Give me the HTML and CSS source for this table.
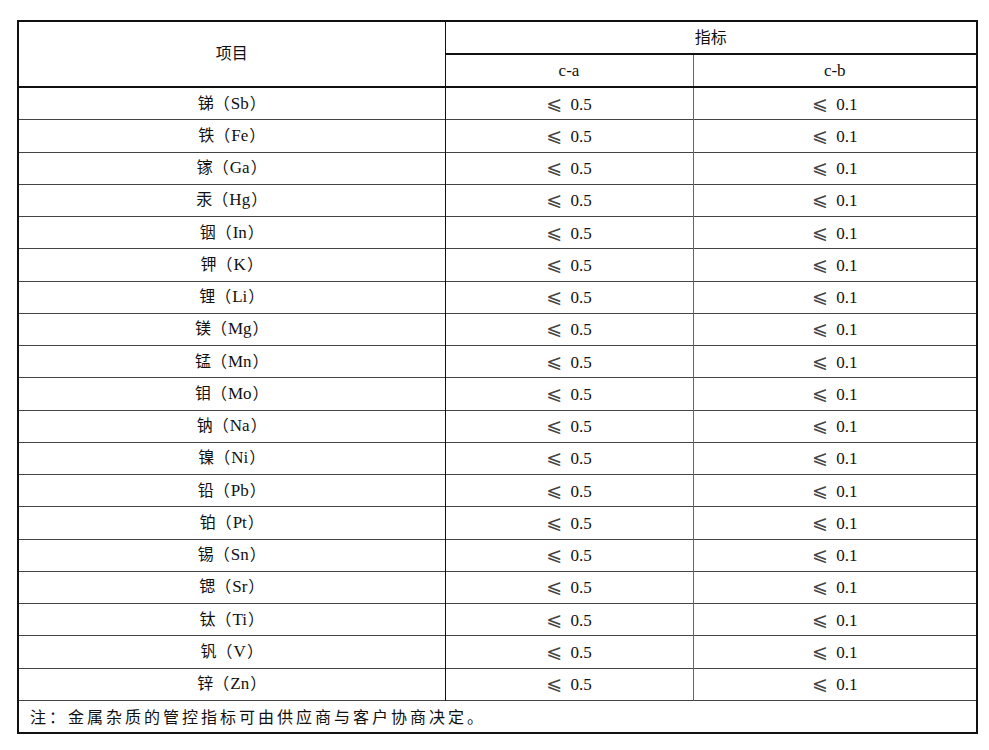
FILE: index.html
```html
<!DOCTYPE html>
<html lang="zh-CN">
<head>
<meta charset="utf-8">
<title>金属杂质指标</title>
<link rel="stylesheet" href="styles.css">
</head>
<body>
<div class="page">
<table class="spec">
  <colgroup>
    <col class="c1"><col class="c2"><col class="c3">
  </colgroup>
  <thead>
    <tr class="h1">
      <th rowspan="2" class="item">项目</th>
      <th colspan="2" class="group">指标</th>
    </tr>
    <tr class="h2">
      <th class="sub">c-a</th>
      <th class="sub">c-b</th>
    </tr>
  </thead>
  <tbody>
    <tr><td>锑（<span class="sym">Sb</span>）</td><td class="val"><span class="le">⩽</span> 0.5</td><td class="val"><span class="le">⩽</span> 0.1</td></tr>
    <tr><td>铁（<span class="sym">Fe</span>）</td><td class="val"><span class="le">⩽</span> 0.5</td><td class="val"><span class="le">⩽</span> 0.1</td></tr>
    <tr><td>镓（<span class="sym">Ga</span>）</td><td class="val"><span class="le">⩽</span> 0.5</td><td class="val"><span class="le">⩽</span> 0.1</td></tr>
    <tr><td>汞（<span class="sym">Hg</span>）</td><td class="val"><span class="le">⩽</span> 0.5</td><td class="val"><span class="le">⩽</span> 0.1</td></tr>
    <tr><td>铟（<span class="sym">In</span>）</td><td class="val"><span class="le">⩽</span> 0.5</td><td class="val"><span class="le">⩽</span> 0.1</td></tr>
    <tr><td>钾（<span class="sym">K</span>）</td><td class="val"><span class="le">⩽</span> 0.5</td><td class="val"><span class="le">⩽</span> 0.1</td></tr>
    <tr><td>锂（<span class="sym">Li</span>）</td><td class="val"><span class="le">⩽</span> 0.5</td><td class="val"><span class="le">⩽</span> 0.1</td></tr>
    <tr><td>镁（<span class="sym">Mg</span>）</td><td class="val"><span class="le">⩽</span> 0.5</td><td class="val"><span class="le">⩽</span> 0.1</td></tr>
    <tr><td>锰（<span class="sym">Mn</span>）</td><td class="val"><span class="le">⩽</span> 0.5</td><td class="val"><span class="le">⩽</span> 0.1</td></tr>
    <tr><td>钼（<span class="sym">Mo</span>）</td><td class="val"><span class="le">⩽</span> 0.5</td><td class="val"><span class="le">⩽</span> 0.1</td></tr>
    <tr><td>钠（<span class="sym">Na</span>）</td><td class="val"><span class="le">⩽</span> 0.5</td><td class="val"><span class="le">⩽</span> 0.1</td></tr>
    <tr><td>镍（<span class="sym">Ni</span>）</td><td class="val"><span class="le">⩽</span> 0.5</td><td class="val"><span class="le">⩽</span> 0.1</td></tr>
    <tr><td>铅（<span class="sym">Pb</span>）</td><td class="val"><span class="le">⩽</span> 0.5</td><td class="val"><span class="le">⩽</span> 0.1</td></tr>
    <tr><td>铂（<span class="sym">Pt</span>）</td><td class="val"><span class="le">⩽</span> 0.5</td><td class="val"><span class="le">⩽</span> 0.1</td></tr>
    <tr><td>锡（<span class="sym">Sn</span>）</td><td class="val"><span class="le">⩽</span> 0.5</td><td class="val"><span class="le">⩽</span> 0.1</td></tr>
    <tr><td>锶（<span class="sym">Sr</span>）</td><td class="val"><span class="le">⩽</span> 0.5</td><td class="val"><span class="le">⩽</span> 0.1</td></tr>
    <tr><td>钛（<span class="sym">Ti</span>）</td><td class="val"><span class="le">⩽</span> 0.5</td><td class="val"><span class="le">⩽</span> 0.1</td></tr>
    <tr><td>钒（<span class="sym">V</span>）</td><td class="val"><span class="le">⩽</span> 0.5</td><td class="val"><span class="le">⩽</span> 0.1</td></tr>
    <tr><td>锌（<span class="sym">Zn</span>）</td><td class="val"><span class="le">⩽</span> 0.5</td><td class="val"><span class="le">⩽</span> 0.1</td></tr>
  </tbody>
  <tfoot>
    <tr><td colspan="3" class="note">注：金属杂质的管控指标可由供应商与客户协商决定。</td></tr>
  </tfoot>
</table>
</div>
</body>
</html>
```

FILE: styles.css
```css
html, body {
  margin: 0;
  padding: 0;
  background: #ffffff;
}

.page {
  padding: 20px 0 0 17px;
}

.spec {
  border-collapse: collapse;
  width: 959px;
  table-layout: fixed;
  border: 2px solid #111;
  font-family: "Liberation Serif", "Noto Sans CJK SC", serif;
  font-size: 16px;
  color: #111;
}

.c1 { width: 427px; }
.c2 { width: 248px; }
.c3 { width: 284px; }

.spec th,
.spec td {
  padding: 0;
  text-align: center;
  vertical-align: middle;
  font-weight: normal;
  line-height: 18px;
}

.h1 th { height: 31px; }
.h2 th { height: 31px; }

.item {
  border-right: 1px solid #111;
  border-bottom: 2px solid #111;
}

.group {
  border-bottom: 2px solid #111;
}

.sub {
  font-size: 17px;
  border-bottom: 2px solid #111;
}

.sub + .sub {
  border-left: 1px solid #666;
}

.spec tbody td {
  height: 31.26px;
  border-top: 1px solid #444;
}

.spec tbody td:first-child {
  border-right: 1px solid #111;
}

.spec tbody td:nth-child(3) {
  border-left: 1px solid #666;
}

.sym {
  font-size: 17px;
  padding: 0 1px;
}

.val {
  font-size: 17px;
}

.le {
  font-family: "DejaVu Sans", sans-serif;
  font-size: 19px;
  line-height: 18px;
  margin-right: 4px;
  color: #444;
}

.note {
  text-align: left !important;
  height: 31px;
  padding-left: 11px !important;
  letter-spacing: 3px;
  border-top: 1px solid #444;
  font-family: "Noto Sans CJK SC", sans-serif;
}
```
